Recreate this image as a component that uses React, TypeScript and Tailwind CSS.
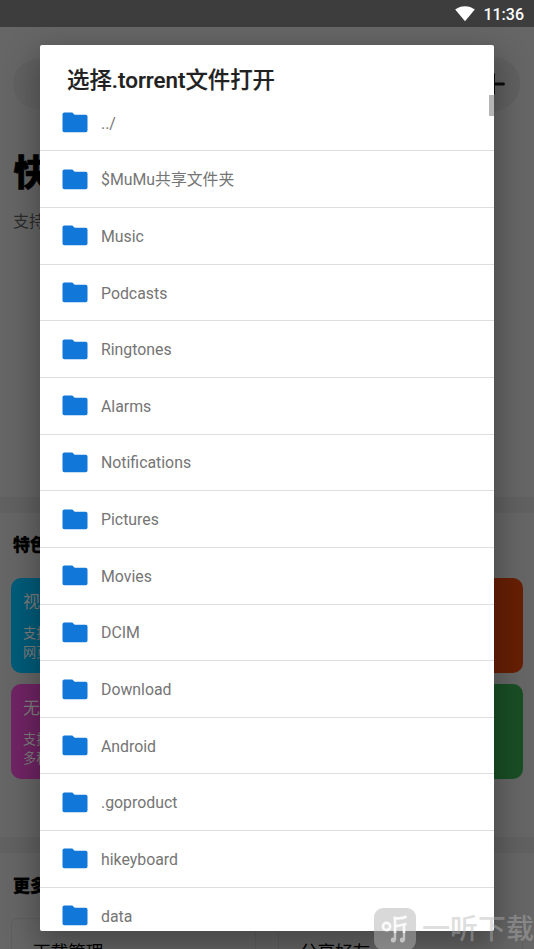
const FOLDERS = [
  '../', '$MuMu共享文件夹', 'Music', 'Podcasts', 'Ringtones', 'Alarms', 'Notifications', 'Pictures',
  'Movies', 'DCIM', 'Download', 'Android', '.goproduct', 'hikeyboard', 'data',
];

function FolderIcon() {
  return (
    <svg className="h-[21px] w-[26px] shrink-0" viewBox="0 0 26 21" fill="#1177d8">
      <path d="M2.300 .4h8l2.400 2.300h11a1.800 1.800 0 0 1 1.800 1.800v14a1.800 1.800 0 0 1-1.800 1.800H2.300a1.800 1.800 0 0 1-1.800-1.800V2.200a1.800 1.800 0 0 1 1.800-1.800Z" />
    </svg>
  );
}

function StatusBar() {
  return (
    <header className="flex h-[27px] items-center justify-end bg-[#3d3d3d] pr-[10px] text-[16px] font-medium text-white">
      <svg className="mr-[8px] h-4 w-5" viewBox="0 0 20 16" fill="white">
        <path d="M10 15.200.2 3.600C5.800-.9 14.200-.9 19.800 3.600Z" />
      </svg>
      <span className="pt-[2px] leading-none">11:36</span>
    </header>
  );
}

function Card({ tone, title, lines }: { tone: string; title?: string; lines?: string[] }) {
  return (
    <div className={`h-[95px] overflow-hidden rounded-[10px] pl-3 pt-3 text-[#7d7d7d] ${tone}`}>
      <div className="text-[17px] leading-6">{title}</div>
      <div className="mt-[11px] text-[13.2px] leading-[18.5px]">
        {lines?.map((line) => <div key={line}>{line}</div>)}
      </div>
    </div>
  );
}

function HomePage() {
  return (
    <main className="flex h-[922px] flex-col bg-[#666]">
      <section className="h-[470px] shrink-0">
        <div className="flex items-center justify-between pl-[13px] pr-[14px] pt-[30px]">
          <div className="h-[50px] w-[300px] rounded-full bg-[#626262]" />
          <div className="flex h-[54px] w-[54px] items-center justify-center rounded-full bg-[#616161]">
            <svg className="h-[22px] w-[24px]" viewBox="0 0 24 22" stroke="#0b0b0b" strokeWidth="2.8" strokeLinecap="round">
              <path d="M12.600 1.500v19M3 11h19.500" />
            </svg>
          </div>
        </div>
        <h1 className="mt-[38px] pl-[13.5px] text-[36px] font-black leading-[50px] text-black [-webkit-text-stroke:0.5px_black]">快</h1>
        <p className="mt-[11px] pl-[13px] text-[16px] leading-6 text-[#2b2b2b]">支持</p>
      </section>
      <div className="h-4 shrink-0 bg-[#616161]" />
      <section className="h-[324px] shrink-0 px-[11px]">
        <h2 className="pl-[2px] pt-[20px] text-[17px] font-black leading-6 text-black [-webkit-text-stroke:0.3px_black]">特色</h2>
        <div className="mt-[21px] grid grid-cols-2 gap-[11px]">
          <Card tone="bg-[#005c7a]" title="视频" lines={['支持', '网页']} />
          <Card tone="bg-[#671f05]" />
          <Card tone="bg-[#702464]" title="无" lines={['支持', '多种']} />
          <Card tone="bg-[#194f25]" />
        </div>
      </section>
      <div className="h-4 shrink-0 bg-[#616161]" />
      <section className="h-[96px] overflow-hidden px-[11px]">
        <h2 className="pl-[2px] pt-[21px] text-[17px] font-black leading-6 text-black [-webkit-text-stroke:0.3px_black]">更多</h2>
        <div className="mt-[20px] grid grid-cols-2 gap-[22px] text-[17.6px] text-black">
          <div className="h-[80px] rounded-md border border-[#5f5f5f] pl-[21px] pt-[20px]">下载管理</div>
          <div className="h-[80px] rounded-md border border-[#5f5f5f] pl-[21px] pt-[20px]">分享好友</div>
        </div>
      </section>
    </main>
  );
}

function FileDialog() {
  return (
    <div className="absolute left-[40px] top-[45px] h-[886px] w-[454px] overflow-hidden rounded-[2px] bg-white">
      <h2 className="pl-[27px] pt-[20px] text-[22.4px] font-medium leading-[30px] text-[#212121] [-webkit-text-stroke:0.2px_#212121]">选择.torrent文件打开</h2>
      <ul className="-mt-[0.4px]">
        {FOLDERS.map((name) => (
          <li
            key={name}
            className="flex h-[56.67px] items-center border-b-[1.5px] border-[#dedede] pl-[22px] text-[15.85px] text-[#757575]"
          >
            <FolderIcon />
            <span className="ml-[13px] mt-[2px]">{name}</span>
          </li>
        ))}
      </ul>
      <div className="absolute right-0 top-[50px] h-[21px] w-[5px] bg-[#b5b5b5]" />
    </div>
  );
}

function Watermark() {
  return (
    <div className="absolute left-[374px] top-[907px] flex items-center">
      <div className="h-[42px] w-[42px] shrink-0 rounded-[9px] bg-[#b4b4b4]/50">
        <svg viewBox="0 0 42 42" fill="none">
          <g stroke="white" strokeOpacity=".85">
            <circle cx="12.500" cy="18.500" r="3.600" strokeWidth="2.600" />
            <path d="M15.500 20.500c-.2 1.200-1 2-2 2.500" strokeWidth="1.500" />
            <path d="M19.500 9.500c5 1.500 9.500 1 13-1M21 10.500V25M21 18.500c4-.8 7-1.800 11.500-2.500M30 17v8" strokeWidth="2.600" />
          </g>
          <g stroke="#c4c4c4" strokeWidth="2.400">
            <path d="M21 25v7M30 25v7" />
            <circle cx="19.300" cy="32" r="1.300" />
            <circle cx="28.300" cy="32" r="1.300" />
          </g>
        </svg>
      </div>
      <span className="ml-[6px] mt-[2px] whitespace-nowrap text-[28px] font-medium leading-[42px] text-[#b4b4b4]/45">一听下载</span>
    </div>
  );
}

export default function App() {
  return (
    <div className="relative h-[949px] w-[534px] overflow-hidden font-[Roboto,'Noto_Sans_CJK_SC',sans-serif]">
      <StatusBar />
      <HomePage />
      <div className="absolute left-[40px] top-[45px] h-[886px] w-[454px] shadow-[0_12px_30px_4px_rgba(0,0,0,0.3)]" />
      <FileDialog />
      <Watermark />
    </div>
  );
}
